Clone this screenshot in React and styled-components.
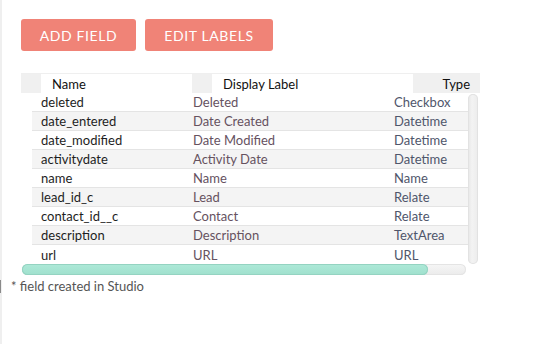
import React from "react";
import styled, { createGlobalStyle } from "styled-components";

const GlobalStyle = createGlobalStyle`
  body {
    margin: 0;
    background: #fff;
    font-family: Lato, "Open Sans", sans-serif;
  }
`;

const Page = styled.div`
  min-height: 344px;
  box-sizing: border-box;
  border-left: 2px solid #efefef;
  padding: 19px 0 0 19px;
`;

const Toolbar = styled.div`
  display: flex;
  gap: 9px;
`;

const Button = styled.button`
  height: 32px;
  width: ${(props) => props.width}px;
  border: none;
  border-radius: 3px;
  background: #f08377;
  color: #fff;
  font-family: Lato, sans-serif;
  font-size: 14px;
  letter-spacing: 0.6px;
  text-transform: uppercase;
  padding: 0;
`;

const Fields = styled.div`
  margin-top: 22px;
  width: 459px;
`;

const HeadRow = styled.div`
  display: grid;
  grid-template-columns: 171px 221px 1fr;
  height: 19px;
  border-top: 1px solid #efefef;
`;

const Th = styled.div`
  display: flex;
  align-items: center;
  font-size: 13px;
  color: #111;
  background: ${(props) => (props.shaded ? "#f0f0f0" : "#fff")};
  justify-content: ${(props) => (props.end ? "flex-end" : "flex-start")};
  padding-right: ${(props) => (props.end ? "10px" : "0")};
`;

const Mark = styled.span`
  width: 20px;
  align-self: stretch;
  background: #f0f0f0;
  margin-right: 11px;
`;

const BodyArea = styled.div`
  display: flex;
  padding-left: 11px;
`;

const Rows = styled.div`
  width: 436px;
`;

const Row = styled.div`
  display: grid;
  grid-template-columns: 152px 201px 1fr;
  padding-left: 9px;
  height: 18px;
  align-items: center;
  font-size: 13px;
  background: ${(props) => (props.odd ? "#f4f4f4" : "#fff")};
  border-bottom: 1px solid #e4e4e4;
  &:last-child {
    border-bottom: none;
    height: 19px;
  }
`;

const Td = styled.div`
  color: ${(props) => props.color};
  white-space: nowrap;
`;

const VScroll = styled.div`
  width: 10px;
  margin-top: 1px;
  border-radius: 6px;
  background: linear-gradient(to right, #e6e6e6, #f3f3f3 40%, #ececec);
  box-shadow: inset 0 0 0 1px #e2e2e2;
`;

const HScroll = styled.div`
  margin: 0 14px 0 1px;
  height: 11px;
  border-radius: 6px;
  background: linear-gradient(#f6f6f6, #ebebeb);
  box-shadow: inset 0 0 0 1px #e4e4e4;
  display: flex;
`;

const HThumb = styled.div`
  width: 406px;
  border-radius: 6px;
  background: linear-gradient(#aee9d8, #9fe0cd);
  box-shadow: inset 0 0 0 1px #94d3c1;
`;

const Note = styled.div`
  margin: 5px 0 0 -21px;
  padding-left: 10px;
  border-left: 1px solid #8a8a8a;
  font-size: 13px;
  line-height: 13px;
  color: #555;
`;

const fields = [
  ["deleted", "Deleted", "Checkbox"],
  ["date_entered", "Date Created", "Datetime"],
  ["date_modified", "Date Modified", "Datetime"],
  ["activitydate", "Activity Date", "Datetime"],
  ["name", "Name", "Name"],
  ["lead_id_c", "Lead", "Relate"],
  ["contact_id__c", "Contact", "Relate"],
  ["description", "Description", "TextArea"],
  ["url", "URL", "URL"],
];

const App = () => {
  return (
    <>
      <GlobalStyle />
      <Page>
        <Toolbar>
          <Button width={115}>Add Field</Button>
          <Button width={128}>Edit Labels</Button>
        </Toolbar>

        <Fields>
          <HeadRow>
            <Th><Mark />Name</Th>
            <Th><Mark />Display Label</Th>
            <Th shaded end>Type</Th>
          </HeadRow>
          <BodyArea>
            <Rows>
              {fields.map((f, i) => (
                <Row key={f[0]} odd={i % 2 === 1}>
                  <Td color="#1e1e1e">{f[0]}</Td>
                  <Td color="#66525f">{f[1]}</Td>
                  <Td color="#4f566b">{f[2]}</Td>
                </Row>
              ))}
            </Rows>
            <VScroll />
          </BodyArea>
          <HScroll>
            <HThumb />
          </HScroll>
        </Fields>

        <Note>* field created in Studio</Note>
      </Page>
    </>
  );
};

export default App;
